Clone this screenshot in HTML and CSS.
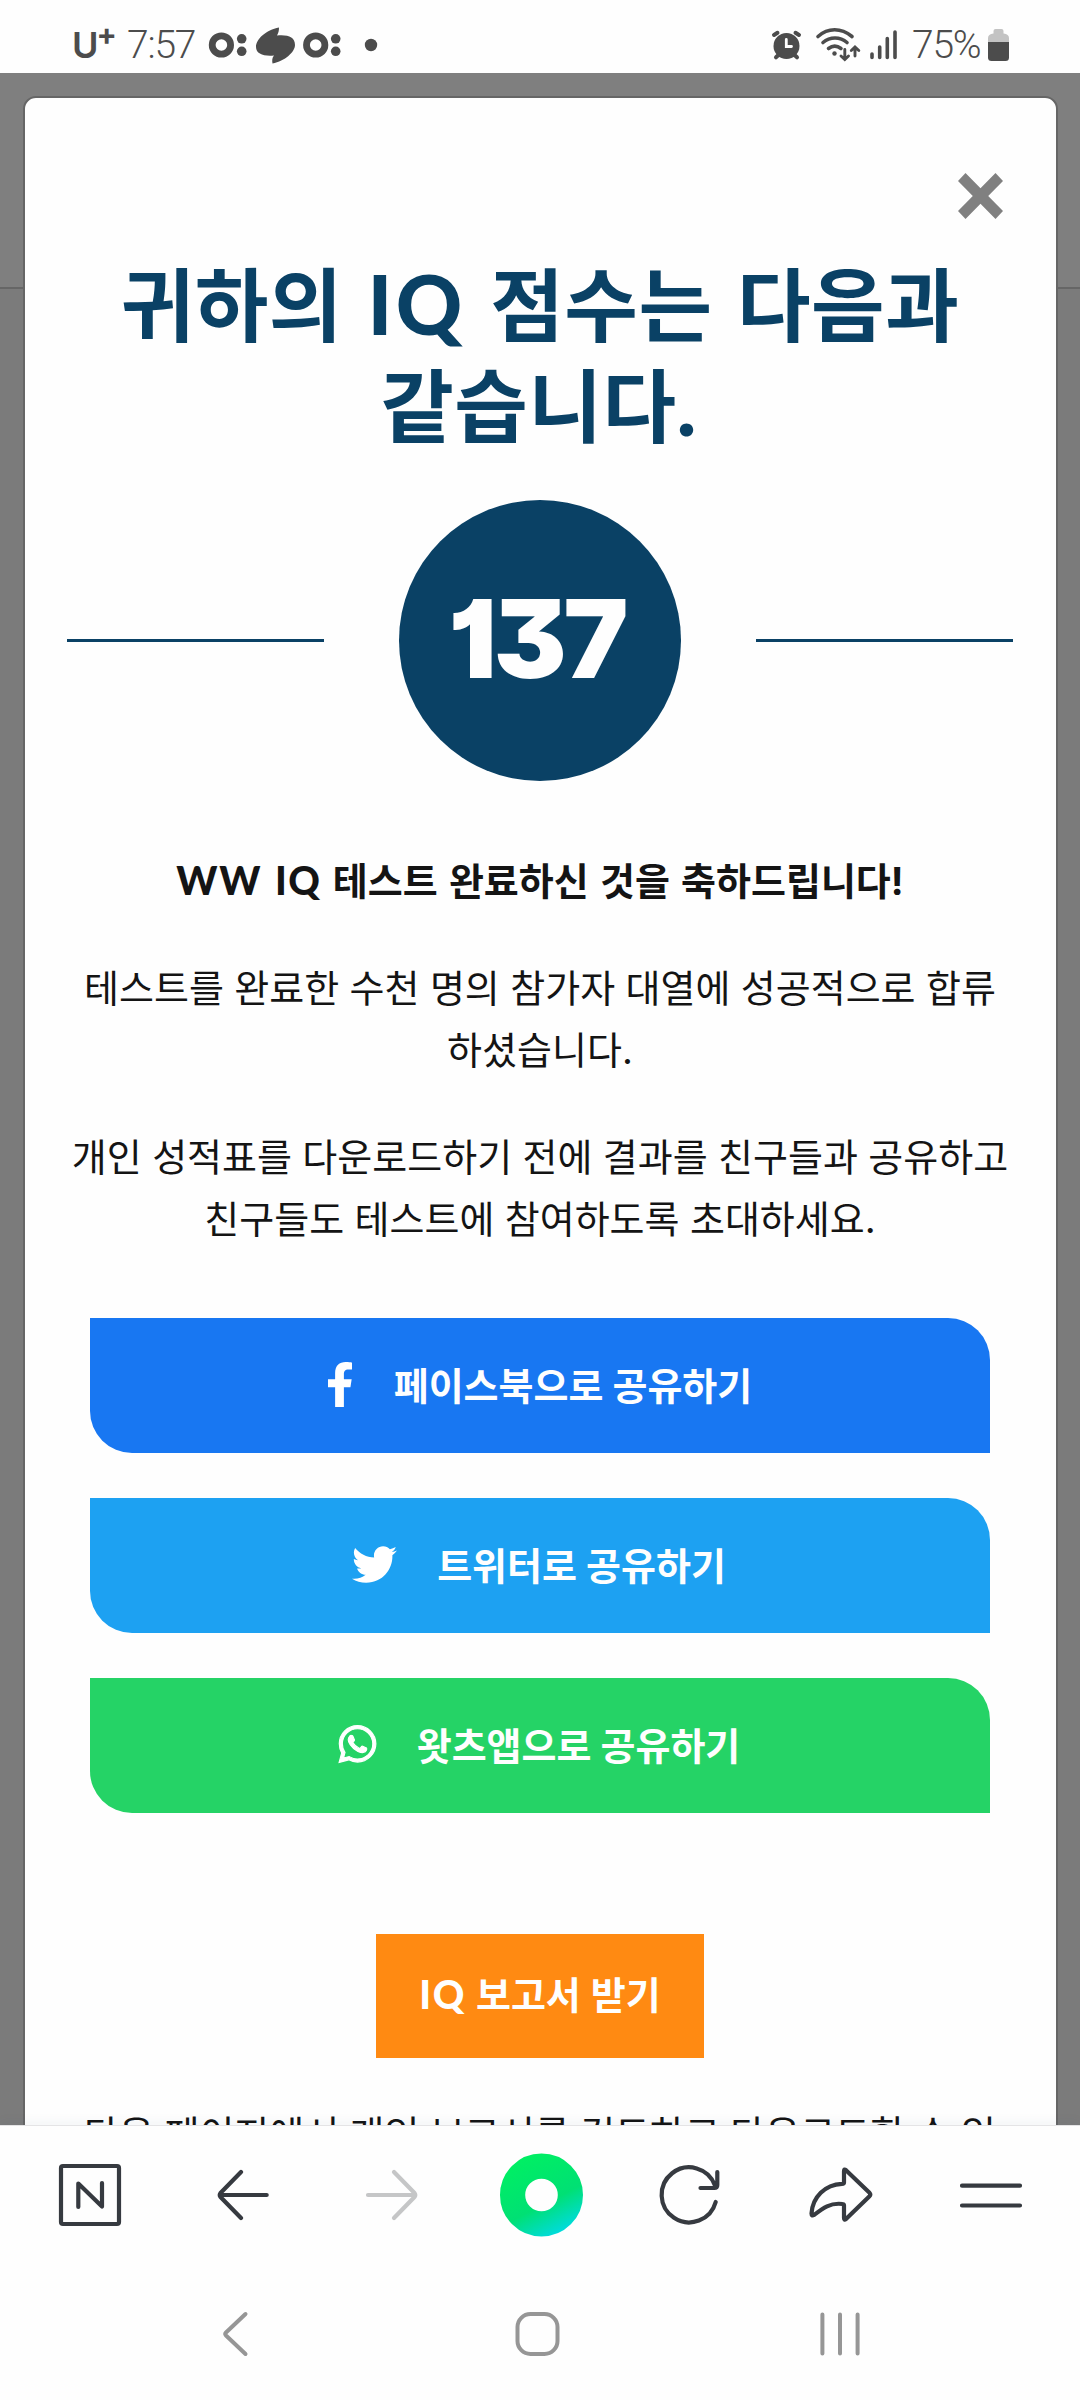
FILE: index.html
```html
<!DOCTYPE html>
<html lang="ko">
<head>
<meta charset="utf-8">
<title>IQ 점수</title>
<link rel="stylesheet" href="styles.css">
</head>
<body>
<div class="screen">
  <header class="status">
    <span class="carrier">U<span class="carrier-plus">+</span></span>
    <span class="clock">7:57</span>
    <svg class="notices" viewBox="205 20 180 50" width="180" height="50" fill="#4c4c4c">
      <circle cx="221.4" cy="45" r="9.2" fill="none" stroke="#4c4c4c" stroke-width="6.8"/>
      <circle cx="241.7" cy="38.8" r="4.8"/><circle cx="241.7" cy="51.3" r="4.8"/>
      <path d="M279 27.500C266 30 256 39 256 47C256 54 264 56.500 274 55.500C272 58 272 60 272.500 63.500C285 61 295 52 295 45C295 37 288 34.500 277 35.500C278.500 33 279 30.500 279 27.500Z"/>
      <circle cx="315.700" cy="45" r="9.2" fill="none" stroke="#4c4c4c" stroke-width="6.8"/>
      <circle cx="335.700" cy="38.800" r="4.8"/><circle cx="335.700" cy="51.300" r="4.8"/>
      <circle cx="371" cy="45" r="6.200"/>
    </svg>
    <svg class="signals" viewBox="765 20 140 50" width="140" height="50" fill="none" stroke="#4c4c4c" stroke-width="3.6" stroke-linecap="round">
      <circle cx="786.500" cy="46" r="13" fill="#4c4c4c" stroke="none"/>
      <path d="M774 35L777.500 32.800M799 35L795.500 32.800M776 57.300L779 54.500M797 57.300L794 54.500" stroke-width="4"/>
      <path d="M786.300 39.500V46.500H791.500" stroke="#fff" stroke-width="2.800"/>
      <path d="M818 36.500C828 27.500 841 27.500 852 36.500M823 42.500C830 36.500 840 36.500 847 42.500M828.500 48.500C832.500 45.500 837 45.500 841 48.500"/>
      <circle cx="834.500" cy="53.500" r="2.200" fill="#4c4c4c" stroke="none"/>
      <path d="M844.800 49.500V58.500M841 56L844.800 59.500L848.500 56M855 56V47.500M851.300 50.500L855 47L858.800 50.500" stroke-width="2.900"/>
      <path d="M872 54V57.500M879.700 47V57.500M887.300 38.500V57.500M895 32V57.500"/>
    </svg>
    <span class="percent">75%</span>
    <svg class="battery" viewBox="987 28 24 34" width="24" height="34">
      <path d="M988 42V38Q988 34 993.500 33.500V31Q993.500 29 995.500 29H1001.500Q1003.500 29 1003.500 31V33.500Q1009 34 1009 38V42Z" fill="#c3c3c3"/>
      <path d="M988 42H1009V57.500Q1009 61 1005.500 61H991.500Q988 61 988 57.500Z" fill="#4c4c4c"/>
    </svg>
  </header>

  <main class="page">
    <section class="modal">
      <button class="close" aria-label="닫기">
        <svg viewBox="0 0 45 46" width="45" height="46" fill="#808080"><path d="M7.500 0L22.500 15.300L37.500 0L45 8L30.200 23L45 38L37.500 46L22.500 30.700L7.500 46L0 38L14.800 23L0 8Z"/></svg>
      </button>
      <h1 class="title">귀하의 <span class="latin">IQ</span> 점수는 다음과<br>같습니다<span class="latin">.</span></h1>
      <div class="score-row">
        <span class="rule"></span>
        <span class="score">137</span>
        <span class="rule"></span>
      </div>
      <p class="text strong"><span class="latin">WW IQ</span> 테스트 완료하신 것을 축하드립니다!</p>
      <p class="text">테스트를 완료한 수천 명의 참가자 대열에 성공적으로 합류<br>하셨습니다.</p>
      <p class="text">개인 성적표를 다운로드하기 전에 결과를 친구들과 공유하고<br>친구들도 테스트에 참여하도록 초대하세요.</p>
      <div class="shares">
        <a class="share facebook">
          <svg viewBox="0 0 320 512" width="28" height="45"><path fill="#fff" d="M279.14 288l14.22-92.66h-88.91v-60.13c0-25.35 12.42-50.06 52.24-50.06h40.42V6.260S260.430 0 225.360 0c-73.220 0-121.080 44.380-121.080 124.720v70.620H22.890V288h81.390v224h100.170V288z"/></svg>
          <span>페이스북으로 공유하기</span>
        </a>
        <a class="share twitter">
          <svg viewBox="0 0 512 512" width="45" height="45"><path fill="#fff" d="M459.370 151.716c.325 4.548.325 9.097.325 13.645 0 138.720-105.583 298.558-298.558 298.558-59.452 0-114.680-17.219-161.137-47.106 8.447.974 16.568 1.299 25.340 1.299 49.055 0 94.213-16.568 130.274-44.832-46.132-.975-84.792-31.188-98.112-72.772 6.498.974 12.995 1.624 19.818 1.624 9.421 0 18.843-1.300 27.614-3.573-48.081-9.747-84.143-51.980-84.143-102.985v-1.299c13.969 7.797 30.214 12.670 47.431 13.319-28.264-18.843-46.781-51.005-46.781-87.391 0-19.492 5.197-37.360 14.294-52.954 51.655 63.675 129.300 105.258 216.365 109.807-1.624-7.797-2.599-15.918-2.599-24.040 0-57.828 46.782-104.934 104.934-104.934 30.213 0 57.502 12.670 76.670 33.137 23.715-4.548 46.456-13.320 66.599-25.340-7.798 24.366-24.366 44.833-46.132 57.827 21.117-2.273 41.584-8.122 60.426-16.243-14.292 20.791-32.161 39.308-52.628 54.253z"/></svg>
          <span>트위터로 공유하기</span>
        </a>
        <a class="share whatsapp">
          <svg viewBox="-12 0 472 512" width="39" height="42"><path fill="#fff" stroke="#fff" stroke-width="14" d="M380.900 97.100C339 55.100 283.200 32 223.900 32c-122.400 0-222 99.600-222 222 0 39.100 10.200 77.300 29.600 111L0 480l117.700-30.900c32.400 17.700 68.900 27 106.100 27h.1c122.300 0 224.100-99.600 224.100-222 0-59.300-25.200-115-67.100-157zm-157 341.600c-33.200 0-65.700-8.900-94-25.700l-6.700-4-69.800 18.300L72 359.200l-4.400-7c-18.500-29.400-28.200-63.300-28.200-98.200 0-101.700 82.800-184.500 184.600-184.500 49.300 0 95.600 19.200 130.400 54.100 34.800 34.900 56.200 81.200 56.100 130.500 0 101.800-84.900 184.600-186.600 184.600zm101.200-138.200c-5.500-2.800-32.800-16.200-37.900-18-5.100-1.900-8.800-2.800-12.500 2.800-3.700 5.600-14.300 18-17.600 21.800-3.200 3.700-6.500 4.200-12 1.400-32.600-16.300-54-29.100-75.500-66-5.700-9.800 5.700-9.100 16.300-30.300 1.800-3.700.9-6.900-.5-9.700-1.400-2.800-12.500-30.100-17.100-41.200-4.500-10.800-9.100-9.300-12.500-9.500-3.200-.2-6.900-.2-10.600-.2-3.700 0-9.700 1.400-14.800 6.900-5.100 5.600-19.400 19-19.400 46.300 0 27.300 19.900 53.700 22.600 57.400 2.800 3.700 39.100 59.700 94.800 83.800 35.200 15.200 49 16.500 66.600 13.900 10.700-1.600 32.800-13.400 37.400-26.400 4.600-13 4.600-24.100 3.200-26.400-1.300-2.500-5-3.900-10.500-6.600z"/></svg>
          <span>왓츠앱으로 공유하기</span>
        </a>
      </div>
      <button class="report"><span class="latin">IQ</span> 보고서 받기</button>
      <p class="text">다음 페이지에서 개인 보고서를 검토하고 다운로드할 수 있</p>
    </section>
  </main>

  <nav class="toolbar">
    <svg viewBox="48 2153 84 84"><rect x="61" y="2166" width="58" height="58" rx="2"/><path d="M78.300 2207V2183.500L102 2206.500V2183"/></svg>
    <svg viewBox="198 2153 84 84"><path d="M266.700 2195H220M241 2172L220.500 2193Q219 2195 220.500 2197L241 2218"/></svg>
    <svg class="disabled" viewBox="348 2153 84 84"><path d="M368 2195H415M394 2172L414.500 2193Q416 2195 414.500 2197L394 2218"/></svg>
    <svg viewBox="498 2153 84 84" class="home-dot">
      <defs><linearGradient id="dot" x1=".15" y1="-.2" x2=".85" y2="1.150"><stop offset="0" stop-color="#00f062"/><stop offset=".62" stop-color="#00e074"/><stop offset="1" stop-color="#00dbe0"/></linearGradient></defs>
      <circle cx="541.500" cy="2195" r="28.900" stroke="url(#dot)" stroke-width="25.200"/>
    </svg>
    <svg viewBox="648 2153 84 84"><path d="M715.700 2202A27.500 27.500 0 1 1 715 2185.500M717.300 2172V2185Q717.300 2188 714.300 2188H700.500"/></svg>
    <svg viewBox="798 2153 84 84"><path d="M844 2171Q844 2168.500 846 2170.200L869.500 2192.800Q871 2194.500 869.500 2196.200L846 2219Q844 2220.500 844 2218V2205.500Q844 2204 842.500 2204C830 2202.500 823 2208 814 2215Q811.500 2216.500 811.500 2213.500C812.500 2197 825 2184.500 842 2183.800Q844 2183.800 844 2182.500Z"/></svg>
    <svg viewBox="948 2153 84 84"><path d="M962 2185.700H1020M962 2205.500H1020"/></svg>
  </nav>
  <nav class="system">
    <svg viewBox="210 2309 50 50"><path d="M245.500 2314L226 2332.500Q224.500 2334 226 2335.500L245.500 2354"/></svg>
    <svg viewBox="512.500 2309 50 50"><rect x="517" y="2314" width="40" height="40" rx="13"/></svg>
    <svg viewBox="815 2309 50 50"><path d="M822.400 2314.500V2353.500M840 2314.500V2353.500M857.600 2314.500V2353.500"/></svg>
  </nav>
</div>
</body>
</html>
```
FILE: styles.css
```css
* { box-sizing: border-box; }

body {
  margin: 0;
  font-family: Inter, "Noto Sans CJK KR", sans-serif;
  color: #141414;
}

.screen {
  width: 1080px;
  height: 2400px;
  display: flex;
  flex-direction: column;
  background: #fefefe;
  overflow: hidden;
}

/* Status bar */
.status {
  height: 73px;
  flex: none;
  display: flex;
  align-items: center;
  padding: 17px 69px 0 72px;
  color: #4c4c4c;
}
.carrier {
  width: 55px;
  font: 600 36px/56px Inter, sans-serif;
  white-space: nowrap;
}
.carrier-plus {
  font-size: 30px;
  font-weight: 700;
  line-height: 0;
  vertical-align: 13px;
  margin-left: -2px;
}
.clock, .percent {
  font: 300 39px/56px Roboto, sans-serif;
  letter-spacing: -1.2px;
}
.clock { width: 78px; }
.signals { margin-left: auto; }
.percent { width: 75px; margin-left: 7px; }

/* Dimmed page behind the dialog */
.page {
  height: 2052px;
  flex: none;
  padding: 23px 22px 0 23px;
  overflow: hidden;
  background: linear-gradient(#7f7f7f 214px, #666 214px 216px, #7b7b7b 216px);
}
.modal {
  height: 2100px;
  padding-right: 1px;
  border: 2px solid #666;
  border-radius: 13px;
  background: #fefefe;
  display: flex;
  flex-direction: column;
  align-items: center;
}
.close {
  align-self: flex-end;
  margin: 75px 52px 0 0;
  padding: 0;
  border: 0;
  background: none;
  height: 46px;
}
.close svg { display: block; }

.latin {
  font-family: Lato, sans-serif;
  font-weight: 900;
  line-height: 0;
}

.title {
  margin: 36px 0 0;
  font-size: 80px;
  line-height: 101px;
  font-weight: 700;
  letter-spacing: .5px;
  word-spacing: 5px;
  color: #0a4165;
  text-align: center;
  white-space: nowrap;
}
.title .latin { font-size: 82px; letter-spacing: 3.5px; }

.score-row {
  align-self: stretch;
  display: flex;
  align-items: center;
  justify-content: space-between;
  height: 281px;
  margin: 43px 42px 0;
}
.rule { width: 257px; height: 3px; background: #0a4165; }
.score {
  width: 282px;
  height: 281px;
  border-radius: 50%;
  background: #0a4165;
  color: #fefefe;
  font: 900 109px/276px Inter, sans-serif;
  font-feature-settings: "cv09", "cv01";
  letter-spacing: -3px;
  text-indent: -6px;
  text-align: center;
}

.text {
  margin: 0 0 45px;
  font-size: 38px;
  line-height: 62px;
  text-align: center;
  white-space: nowrap;
  word-spacing: -.3px;
}
.strong { font-weight: 700; margin-top: 69px; word-spacing: 2.2px; }
.strong .latin { font-size: 39px; letter-spacing: 1.6px; }

.shares {
  width: 900px;
  display: flex;
  flex-direction: column;
  gap: 45px;
  margin-top: 23px;
}
.share {
  height: 135px;
  display: flex;
  align-items: center;
  justify-content: center;
  gap: 40px;
  padding-right: 2px;
  border-radius: 0 42px 0 42px;
  color: #fefefe;
  font-size: 38px;
  line-height: 62px;
  font-weight: 700;
}
.share svg { margin-top: -3px; }
.facebook { background: #1877f2; }
.twitter { background: #1da1f2; }
.whatsapp { background: #25d366; }

.report {
  width: 328px;
  height: 124px;
  flex: none;
  margin: 121px 0 45px;
  padding: 0 0 2px;
  border: 0;
  background: #ff8a12;
  color: #fefefe;
  font: 700 38px/62px Inter, "Noto Sans CJK KR", sans-serif;
  word-spacing: 1px;
}
.report .latin { font-size: 39px; letter-spacing: 1.6px; }

/* Browser toolbar */
.toolbar {
  position: relative;
  height: 140px;
  flex: none;
  display: grid;
  grid-template-columns: repeat(7, 150px);
  justify-content: center;
  justify-items: center;
  align-items: center;
  padding-bottom: 1px;
  background: #fefefe;
  border-top: 1px solid #e4e4e6;
  box-shadow: 0 -2px 12px rgba(40, 70, 110, .06);
  clip-path: inset(-20px 0 0);
}
.toolbar svg {
  width: 84px;
  height: 84px;
  overflow: visible;
  fill: none;
  stroke: #363a40;
  stroke-width: 4.200;
  stroke-linecap: round;
  stroke-linejoin: round;
}
.toolbar .disabled { stroke: #c5c6c7; }
.toolbar .home-dot { stroke: none; }

/* System navigation */
.system {
  flex: 1;
  display: flex;
  align-items: center;
  justify-content: space-between;
  padding: 3px 215px 0 210px;
}
.system svg {
  width: 50px;
  height: 50px;
  fill: none;
  stroke: #969696;
  stroke-width: 4;
  stroke-linecap: round;
}
```
